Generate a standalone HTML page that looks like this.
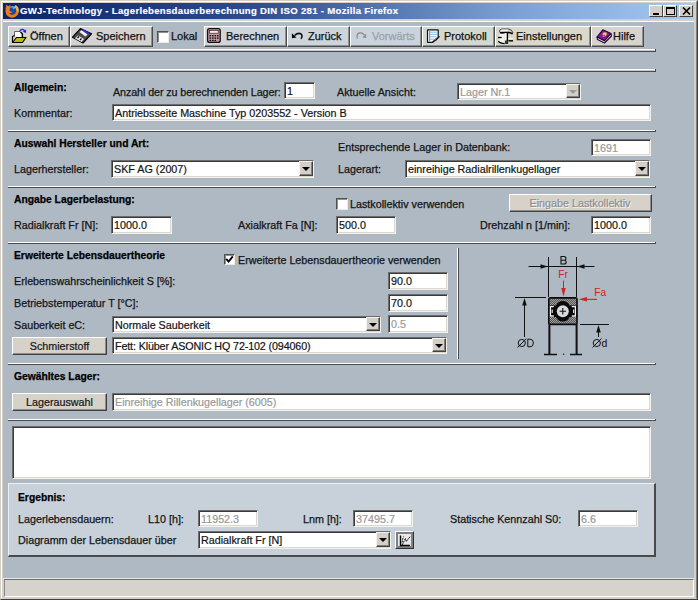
<!DOCTYPE html>
<html><head><meta charset="utf-8">
<style>
*{box-sizing:border-box}
html,body{margin:0;padding:0}
body{width:698px;height:600px;overflow:hidden;position:relative;background:#d4d0c8;font-family:"Liberation Sans",sans-serif;font-size:10.75px;color:#141414}
.a{position:absolute}
.t{position:absolute;white-space:nowrap;line-height:13px;-webkit-text-stroke:0.25px currentColor}
.b{font-weight:bold;font-size:10.3px;color:#000}
.sep{position:absolute;left:8px;width:648px;height:2px;border-top:1px solid #fff;border-bottom:1px solid #4a4a4a;background:#c8c8c6}
.sep:after{content:"";position:absolute;right:0;top:-1px;width:1px;height:2px;background:#4a4a4a}
.inp{position:absolute;background:#fff;border-top:1px solid #6c6c6c;border-left:1px solid #6c6c6c;border-right:1px solid #f4f2ec;border-bottom:1px solid #f4f2ec;box-shadow:inset 1px 1px 0 #3a3a3a,inset -1px -1px 0 #dcd8d0}
.inp span{position:absolute;left:2px;top:2px;white-space:nowrap;line-height:13px;-webkit-text-stroke:0.2px currentColor}
.dis{color:#999}
.dd{position:absolute;top:0;right:0;width:14px;height:calc(100% - 1px);background:#d4d0c8;border-top:1px solid #f4f2ee;border-left:1px solid #f4f2ee;border-right:1px solid #404040;border-bottom:1px solid #404040;box-shadow:inset -1px -1px 0 #808080}
.dd:after{content:"";position:absolute;left:2px;top:5px;border-left:4px solid transparent;border-right:4px solid transparent;border-top:4px solid #000}
.dd.g:after{border-top-color:#999}
.btn{position:absolute;background:#d6d2ca;-webkit-text-stroke:0.2px currentColor;border-top:1px solid #fff;border-left:1px solid #fff;border-right:1px solid #404040;border-bottom:1px solid #404040;box-shadow:inset -1px -1px 0 #8c8c8c;text-align:center;line-height:17px;white-space:nowrap}
.tb{position:absolute;top:26px;height:21px;border-top:1px solid #fff;border-left:1px solid #fff;border-right:1px solid #4a4a4a;border-bottom:1px solid #4a4a4a;box-shadow:inset -1px -1px 0 #909090}
.tt{top:30px;font-size:11px;color:#111}
.cb{position:absolute;width:12px;height:12px;background:#fff;border-top:1px solid #505050;border-left:1px solid #505050;border-right:1px solid #eeeae2;border-bottom:1px solid #eeeae2;box-shadow:inset 1px 1px 0 #909090}
</style></head><body>
<!-- window frame -->
<div class="a" style="left:0;top:0;width:698px;height:600px;border-top:1px solid #d4d0c8;border-left:1px solid #d4d0c8;border-right:1px solid #404040;border-bottom:1px solid #404040"></div>
<div class="a" style="left:1px;top:1px;width:696px;height:598px;border-top:1px solid #fff;border-left:1px solid #fff;border-right:1px solid #808080;border-bottom:1px solid #d4d0c8"></div>
<!-- title bar -->
<div class="a" style="left:3px;top:3px;width:691px;height:16px;background:linear-gradient(to right,#0a246a 0%,#2c4a8c 35%,#7ea2d6 75%,#a6caf0 100%)"></div>
<svg class="a" style="left:0;top:0" width="24" height="22" viewBox="0 0 24 22">
 <circle cx="12.8" cy="10.4" r="4.6" fill="#1a4a98"/>
 <path d="M10.5 6.4 Q13.5 5 16 7.6 L13.6 9.6Z" fill="#4aa8e8"/>
 <path d="M8.73 6.66 A5.4 5.4 0 1 0 17.52 11.74" fill="none" stroke="#f07c18" stroke-width="2.8"/>
 <path d="M17.52 11.74 A5.4 5.4 0 0 0 14.9 6.12" fill="none" stroke="#f6c030" stroke-width="2.4"/>
 <path d="M5.6 9 L6.2 4.8 L8.2 6.4 L10.2 5 L10.8 7.4 Q9 8.6 9.6 10.4 Q10.6 12 13 11.6 Q11.6 13.6 9 13.2 Z" fill="#f27a18"/>
</svg>
<div class="t b" style="left:20px;top:3px;color:#fff;font-size:9.6px;letter-spacing:0.3px;line-height:15px;-webkit-text-stroke:0.15px #fff">GWJ-Technology - Lagerlebensdauerberechnung DIN ISO 281 - Mozilla Firefox</div>
<!-- title buttons -->
<div class="a" style="left:649px;top:5px;width:14px;height:12px;background:#d4d0c8;border-top:1px solid #fff;border-left:1px solid #fff;border-right:1px solid #404040;border-bottom:1px solid #404040"><div class="a" style="left:3px;top:7px;width:6px;height:2px;background:#000"></div></div>
<div class="a" style="left:663px;top:5px;width:14px;height:12px;background:#d4d0c8;border-top:1px solid #fff;border-left:1px solid #fff;border-right:1px solid #404040;border-bottom:1px solid #404040"><div class="a" style="left:2px;top:1px;width:9px;height:8px;border:1px solid #000;border-top-width:2px"></div></div>
<div class="a" style="left:679px;top:5px;width:14px;height:12px;background:#d4d0c8;border-top:1px solid #fff;border-left:1px solid #fff;border-right:1px solid #404040;border-bottom:1px solid #404040">
<svg class="a" style="left:2px;top:1px" width="9" height="8" viewBox="0 0 9 8"><path d="M1 0.5 L8 7.5 M8 0.5 L1 7.5" stroke="#000" stroke-width="1.6"/></svg></div>
<!-- content bg -->
<div class="a" style="left:3px;top:21px;width:691px;height:1px;background:#fff"></div>
<div class="a" style="left:3px;top:22px;width:691px;height:556px;background:#afb9c3"></div>

<!-- toolbar -->
<div class="tb" style="left:8px;width:62px;background:#d3d3d2"></div>
<div class="tb" style="left:70px;width:83px;background:#d3d3d2"></div>
<div class="tb" style="left:204px;width:83px;background:#ced5dc"></div>
<div class="tb" style="left:287px;width:63px;background:#ccd4dc"></div>
<div class="tb" style="left:350px;width:72px;background:#c9d3dd"></div>
<div class="tb" style="left:422px;width:73px;background:#d2d9d2"></div>
<div class="tb" style="left:495px;width:96px;background:#d9d9cb"></div>
<div class="tb" style="left:591px;width:53px;background:#d9d3cd"></div>
<div class="cb" style="left:157px;top:31px"></div>
<div class="t tt" style="left:30px">Öffnen</div>
<div class="t tt" style="left:96px">Speichern</div>
<div class="t tt" style="left:171px">Lokal</div>
<div class="t tt" style="left:226px">Berechnen</div>
<div class="t tt" style="left:308px">Zurück</div>
<div class="t tt" style="left:372px;color:#9ca2a8">Vorwärts</div>
<div class="t tt" style="left:444px">Protokoll</div>
<div class="t tt" style="left:516px">Einstellungen</div>
<div class="t tt" style="left:613px">Hilfe</div>

<!-- separators -->
<div class="sep" style="top:49px;height:3px"></div>
<div class="sep" style="top:69px;height:3px"></div>
<div class="sep" style="top:130px"></div>
<div class="sep" style="top:186px"></div>
<div class="sep" style="top:242px"></div>
<div class="sep" style="top:363px"></div>
<div class="sep" style="top:419px"></div>

<!-- Allgemein -->
<div class="t b" style="left:14px;top:81px">Allgemein:</div>
<div class="t" style="left:113px;top:85.5px;letter-spacing:-0.1px">Anzahl der zu berechnenden Lager:</div>
<div class="inp" style="left:284px;top:82px;width:31px;height:17px"><span>1</span></div>
<div class="t" style="left:337px;top:85.5px">Aktuelle Ansicht:</div>
<div class="inp" style="left:457px;top:83px;width:124px;height:17px"><span class="dis">Lager Nr.1</span><div class="dd g"></div></div>
<div class="t" style="left:14px;top:107px">Kommentar:</div>
<div class="inp" style="left:112px;top:104px;width:539px;height:17px"><span>Antriebsseite Maschine Typ 0203552 - Version B</span></div>

<!-- Auswahl -->
<div class="t b" style="left:14px;top:137px">Auswahl Hersteller und Art:</div>
<div class="t" style="left:338px;top:141px">Entsprechende Lager in Datenbank:</div>
<div class="inp" style="left:591px;top:139px;width:60px;height:17px"><span class="dis">1691</span></div>
<div class="t" style="left:14px;top:163px">Lagerhersteller:</div>
<div class="inp" style="left:111px;top:160px;width:203px;height:18px"><span>SKF AG (2007)</span><div class="dd"></div></div>
<div class="t" style="left:338px;top:163px">Lagerart:</div>
<div class="inp" style="left:405px;top:160px;width:245px;height:18px"><span>einreihige Radialrillenkugellager</span><div class="dd"></div></div>

<!-- Belastung -->
<div class="t b" style="left:14px;top:192.5px">Angabe Lagerbelastung:</div>
<div class="cb" style="left:336px;top:198px"></div>
<div class="t" style="left:350px;top:197.5px">Lastkollektiv verwenden</div>
<div class="btn" style="left:509px;top:194px;width:143px;height:18px;color:#8e8e8e;text-shadow:1px 1px 0 #f4f4f4;padding-right:1px">Eingabe Lastkollektiv</div>
<div class="t" style="left:14px;top:219px">Radialkraft Fr [N]:</div>
<div class="inp" style="left:111px;top:216px;width:61px;height:18px"><span>1000.0</span></div>
<div class="t" style="left:238px;top:219px">Axialkraft Fa [N]:</div>
<div class="inp" style="left:336px;top:216px;width:60px;height:18px"><span>500.0</span></div>
<div class="t" style="left:480px;top:219px">Drehzahl n [1/min]:</div>
<div class="inp" style="left:591px;top:216px;width:60px;height:18px"><span>1000.0</span></div>

<!-- Erweiterte -->
<div class="t b" style="left:14px;top:248.5px">Erweiterte Lebensdauertheorie</div>
<div class="cb" style="left:224px;top:254px;width:11px;height:11px"><svg class="a" style="left:0px;top:0px" width="9" height="9" viewBox="0 0 9 9"><path d="M1.2 3.8 L3.6 6.6 L7.8 1.4" fill="none" stroke="#000" stroke-width="1.9"/></svg></div>
<div class="t" style="left:238px;top:253.5px">Erweiterte Lebensdauertheorie verwenden</div>
<div class="t" style="left:14px;top:274.5px">Erlebenswahrscheinlichkeit S [%]:</div>
<div class="inp" style="left:388px;top:272px;width:60px;height:18px"><span>90.0</span></div>
<div class="t" style="left:14px;top:296.5px">Betriebstemperatur T [°C]:</div>
<div class="inp" style="left:388px;top:294px;width:60px;height:18px"><span>70.0</span></div>
<div class="t" style="left:14px;top:319px">Sauberkeit eC:</div>
<div class="inp" style="left:112px;top:316px;width:269px;height:17px"><span>Normale Sauberkeit</span><div class="dd"></div></div>
<div class="inp" style="left:388px;top:315px;width:60px;height:18px"><span class="dis">0.5</span></div>
<div class="btn" style="left:12px;top:337px;width:95px;height:18px">Schmierstoff</div>
<div class="inp" style="left:112px;top:337px;width:335px;height:17px"><span style="letter-spacing:-0.14px">Fett: Klüber ASONIC HQ 72-102 (094060)</span><div class="dd"></div></div>
<div class="a" style="left:457px;top:248px;width:2px;height:111px;border-left:1px solid #fff;border-right:1px solid #4a4a4a"></div>

<!-- bearing drawing -->
<svg class="a" style="left:500px;top:245px" width="130" height="120" viewBox="500 245 130 120">
 <defs><pattern id="h" width="2" height="2" patternUnits="userSpaceOnUse"><rect width="2" height="2" fill="#5a5a5a"/><rect width="1" height="1" fill="#9a9a9a"/><rect x="1" y="1" width="1" height="1" fill="#9a9a9a"/></pattern></defs>
 <g stroke="#111" fill="none" stroke-width="1">
  <path d="M548.5 257 V297 M576.5 257 V297"/>
  <path d="M528.5 266.5 H594.5"/>
  <path d="M515 297.5 H546 M580 324.5 H609"/>
  <path d="M524.5 302 V337 M598.5 329 V337"/>
 </g>
 <path d="M548 266.5 L540.5 264.2 L540.5 268.8Z M577 266.5 L584.5 264.2 L584.5 268.8Z" fill="#111"/>
 <path d="M524.5 298 L522.2 305.5 L526.8 305.5Z M598.5 325 L596.2 332.5 L600.8 332.5Z" fill="#111"/>
 <path d="M561 256.5 H564 Q566 256.5 566 258.6 Q566 260 564.4 260.2 Q566.2 260.5 566.2 262 Q566.2 264 564 264 H561Z M561 260.2 H564.2" fill="none" stroke="#111" stroke-width="1.1"/>
 <g fill="#c42828" stroke="none">
  <text x="558.2" y="277.6" font-family="Liberation Sans" font-size="10.2">Fr</text>
  <text x="594.2" y="295.6" font-family="Liberation Sans" font-size="10.2">Fa</text>
  <rect x="563" y="280.5" width="1" height="8"/>
  <path d="M563.5 296.5 L561.2 288 L565.8 288Z"/>
  <rect x="586" y="298.8" width="11" height="1.1"/>
  <path d="M578.8 299.3 L587 297 L587 301.6Z"/>
 </g>
 <rect x="548.6" y="297.6" width="28.6" height="27" rx="2" fill="#0a0a0a" stroke="#0a0a0a" stroke-width="1.2"/>
 <path d="M549.6 298.8 H576.2 V305.4 H569.5 A7.3 7.3 0 0 0 556 305.4 H549.6Z" fill="url(#h)"/>
 <path d="M549.6 323.6 H576.2 V317 H569.5 A7.3 7.3 0 0 1 556 317 H549.6Z" fill="url(#h)"/>
 <path d="M553.8 306.6 H550.4 V316 H553.8 M571.8 306.6 H575.4 V316 H571.8" fill="none" stroke="#f0f0f0" stroke-width="1.3"/>
 <rect x="551.6" y="309.5" width="1.2" height="3.5" fill="#e0e0e0"/>
 <rect x="573" y="309.5" width="1.2" height="3.5" fill="#e0e0e0"/>
 <circle cx="562.8" cy="311.3" r="6" fill="#d8dadc"/>
 <path d="M559.6 311.3 H566 M562.8 308.1 V314.5" stroke="#111" stroke-width="1.1"/>
 <path d="M549.4 324 V354.5 M576.6 324 V354.5" stroke="#111" stroke-width="2"/>
 <path d="M544 354.5 H557 M570 354.5 H582" stroke="#111" stroke-width="1.5"/>
 <rect x="563" y="353.6" width="1.2" height="1.2" fill="#111"/>
 <g fill="none" stroke="#111" stroke-width="1">
  <circle cx="521.8" cy="343" r="3.6"/><path d="M517.5 347.5 L526.5 338.5"/>
  <path d="M527.8 339.2 V346.8 H530 Q533.4 346.8 533.4 343 Q533.4 339.2 530 339.2Z"/>
  <circle cx="596.8" cy="343" r="3.6"/><path d="M592.5 347.5 L601.5 338.5"/>
 </g>
 <text x="601.6" y="347" font-family="Liberation Sans" font-size="10.5" fill="#111">d</text>
</svg>

<!-- Gewähltes Lager -->
<div class="t b" style="left:14px;top:369.5px">Gewähltes Lager:</div>
<div class="btn" style="left:12px;top:393px;width:95px;height:18px">Lagerauswahl</div>
<div class="inp" style="left:112px;top:393px;width:539px;height:18px"><span class="dis">Einreihige Rillenkugellager (6005)</span></div>

<!-- textarea -->
<div class="inp" style="left:12px;top:426px;width:639px;height:53px"></div>

<!-- Ergebnis -->
<div class="a" style="left:8px;top:483px;width:648px;height:74px;background:#c8d1da;border-top:1px solid #f0f0ec;border-left:1px solid #f0f0ec;border-right:2px solid #4a4a4a;border-bottom:2px solid #4a4a4a"></div>
<div class="t b" style="left:18px;top:490.5px">Ergebnis:</div>
<div class="t" style="left:18px;top:513px">Lagerlebensdauern:</div>
<div class="t" style="left:148px;top:513px">L10 [h]:</div>
<div class="inp" style="left:198px;top:510px;width:60px;height:17px"><span class="dis">11952.3</span></div>
<div class="t" style="left:303px;top:513px">Lnm [h]:</div>
<div class="inp" style="left:353px;top:510px;width:60px;height:17px"><span class="dis">37495.7</span></div>
<div class="t" style="left:450px;top:513px">Statische Kennzahl S0:</div>
<div class="inp" style="left:578px;top:510px;width:60px;height:17px"><span class="dis">6.6</span></div>
<div class="t" style="left:18px;top:534px">Diagramm der Lebensdauer über</div>
<div class="inp" style="left:198px;top:531px;width:193px;height:18px"><span>Radialkraft Fr [N]</span><div class="dd"></div></div>
<div class="a" style="left:395px;top:531px;width:19px;height:18px;background:#e8e8e8;border-top:1px solid #fff;border-left:1px solid #fff;border-right:1px solid #303030;border-bottom:1px solid #303030;box-shadow:inset 0 0 0 2px #808080">
 <svg class="a" style="left:2px;top:2px" width="14" height="13" viewBox="0 0 14 13"><path d="M2.5 1.5 V11.5 H12" fill="none" stroke="#000" stroke-width="1.4"/><path d="M4 8.5 L5.5 2.5 M4.2 11 L7.5 4.5 L8.3 7.5 L12.5 2.2" fill="none" stroke="#111" stroke-width="1" stroke-dasharray="2 0.8"/></svg>
</div>

<!-- status bar -->
<div class="a" style="left:3px;top:578px;width:691px;height:1px;background:#eceae4"></div>
<div class="a" style="left:4px;top:579px;width:690px;height:18px;background:#d6d3cc;border-top:1px solid #6a6a6a;border-left:1px solid #8a8a8a;border-right:1px solid #fff;border-bottom:1px solid #fff"></div>
<svg class="a" style="left:0;top:0" width="698" height="600" viewBox="0 0 698 600">
 <!-- open folder -->
 <path d="M14.5 36.5 V31.5 H20 L22 33.5 V37.5" fill="#fff" stroke="#555" stroke-width="0.9"/>
 <path d="M20.5 32 L22.5 34 V37.5" fill="none" stroke="#000" stroke-width="1.2"/>
 <path d="M12.5 42.5 V36.5 L14.5 35.5" fill="none" stroke="#000" stroke-width="1.2"/>
 <path d="M12.5 42.5 H22.5 L26 37.5 H16.5Z" fill="#b4bc1c" stroke="#000" stroke-width="1.1" stroke-linejoin="round"/>
 <path d="M19.5 31.5 Q21.5 28 24.5 30.5" fill="none" stroke="#2828d8" stroke-width="1.3"/>
 <path d="M22.8 31.2 L26.2 29.4 L25.6 33.2Z" fill="#1818e0"/>
 <!-- floppy -->
 <path d="M72.5 37.2 L80.4 28.6 L91.5 33.8 L83 43Z" fill="#4a4a4a" stroke="#000" stroke-width="1.2" stroke-linejoin="round"/>
 <path d="M81.5 30 L83 29.5 L89 32.5 L87.5 34.5Z" fill="#2030e8"/>
 <path d="M79.5 32 L81.5 30.2 L87.5 34.4 L85.5 36.5Z" fill="#f4f4f4"/>
 <path d="M75 38.5 L78 35.5 L84 39 L81.5 42Z" fill="#e8e8e8"/>
 <path d="M77.5 38 L79 36.6 M80 40 L81.5 38.5" stroke="#000" stroke-width="1.3"/>
 <!-- calculator -->
 <rect x="207.6" y="28.6" width="12.6" height="13.8" rx="2" fill="#c49aa2" stroke="#181010" stroke-width="1.3"/>
 <rect x="209.6" y="30.6" width="8.6" height="2.6" fill="#f4f0f0" stroke="#3a2a2a" stroke-width="0.7"/>
 <g fill="#141010">
  <rect x="209.5" y="35" width="1.6" height="1.4"/><rect x="212" y="35" width="1.6" height="1.4"/><rect x="214.5" y="35" width="1.6" height="1.4"/><rect x="217" y="35" width="1.6" height="1.4"/>
  <rect x="209.5" y="37.4" width="1.6" height="1.4"/><rect x="212" y="37.4" width="1.6" height="1.4"/><rect x="214.5" y="37.4" width="1.6" height="1.4"/><rect x="217" y="37.4" width="1.6" height="1.4"/>
  <rect x="209.5" y="39.8" width="1.6" height="1.4"/><rect x="212" y="39.8" width="1.6" height="1.4"/><rect x="214.5" y="39.8" width="1.6" height="1.4"/>
 </g>
 <!-- undo -->
 <path d="M294.5 35.5 Q298 32.2 301.2 34 Q303 35.8 301 38.8" fill="none" stroke="#111" stroke-width="1.5"/>
 <path d="M291.8 33.2 L292 38.2 L296.5 37.6Z" fill="#000"/>
 <!-- redo (disabled) -->
 <path d="M357.5 38.5 Q355.8 34 359.5 33 Q362.5 32.6 364.5 35" fill="none" stroke="#8c8c8c" stroke-width="1.3"/>
 <path d="M366.2 33.8 L366.2 38 L362.4 37.6Z" fill="#8c8c8c"/>
 <!-- protokoll -->
 <path d="M427.5 29.8 H438.2 V37 L432.5 42.3 H427.5Z" fill="#f8f8ff" stroke="#111" stroke-width="1.2" stroke-linejoin="round"/>
 <g stroke="#7ab8e8" stroke-width="0.9"><path d="M430 32.2 H437 M430 34.4 H437 M430 36.8 H436 M430 39.2 H434"/></g>
 <path d="M429.6 30.4 V41.8" stroke="#e06070" stroke-width="1"/>
 <path d="M432.5 42.3 L436 40 L439.5 36.6 L438.2 37" fill="#ddd" stroke="#111" stroke-width="1.1"/>
 <!-- tools -->
 <rect x="499.4" y="34" width="4.8" height="9" fill="#f2f2ee"/>
 <path d="M499.5 31.5 Q499.5 29 502 29 L508.5 29 Q512 29.5 513 32.8 L511.5 33.6 Q510 32.2 508 32.4 L501 32.8 Q499.5 32.6 499.5 31.5Z" fill="#cfcfcf" stroke="#222" stroke-width="0.8"/>
 <path d="M501 30.2 H508" stroke="#fff" stroke-width="1.2"/>
 <path d="M500 32.7 L508.5 32.5 Q511 32.5 512.6 34" stroke="#000" stroke-width="1.5" fill="none"/>
 <rect x="504.6" y="33" width="2.2" height="7.5" fill="#fcfcfc"/>
 <path d="M507.4 33 V44" stroke="#000" stroke-width="1.4"/>
 <rect x="505" y="40.5" width="2.6" height="3.5" fill="#3a3a3a"/>
 <path d="M498 37.5 H501.6" stroke="#000" stroke-width="1.3"/>
 <path d="M498.4 41.2 Q500 43.6 504.6 43.6" stroke="#000" stroke-width="1.3" fill="none"/>
 <path d="M508.5 38.6 H512.8" stroke="#f8f8f8" stroke-width="1.2"/>
 <path d="M508.5 40.8 H513" stroke="#000" stroke-width="1.4"/>
 <!-- book -->
 <path d="M597 37 L602.8 29.8 L611 33.5 L604.5 40.8Z" fill="#8614aa" stroke="#1a0428" stroke-width="1.1" stroke-linejoin="round"/>
 <path d="M597 37 L597.5 39.5 L604.5 43 L611.5 36 L611 33.5 L604.5 40.8Z" fill="#e8e0f0" stroke="#1a0820" stroke-width="1.1" stroke-linejoin="round"/>
 <path d="M603 34.8 Q604 32.6 605.8 33.2 Q606.5 34.4 604.8 35.6" fill="none" stroke="#f0e020" stroke-width="1.6"/>
 <circle cx="603.6" cy="36.2" r="0.9" fill="#f08020"/>
</svg>
</body></html>
